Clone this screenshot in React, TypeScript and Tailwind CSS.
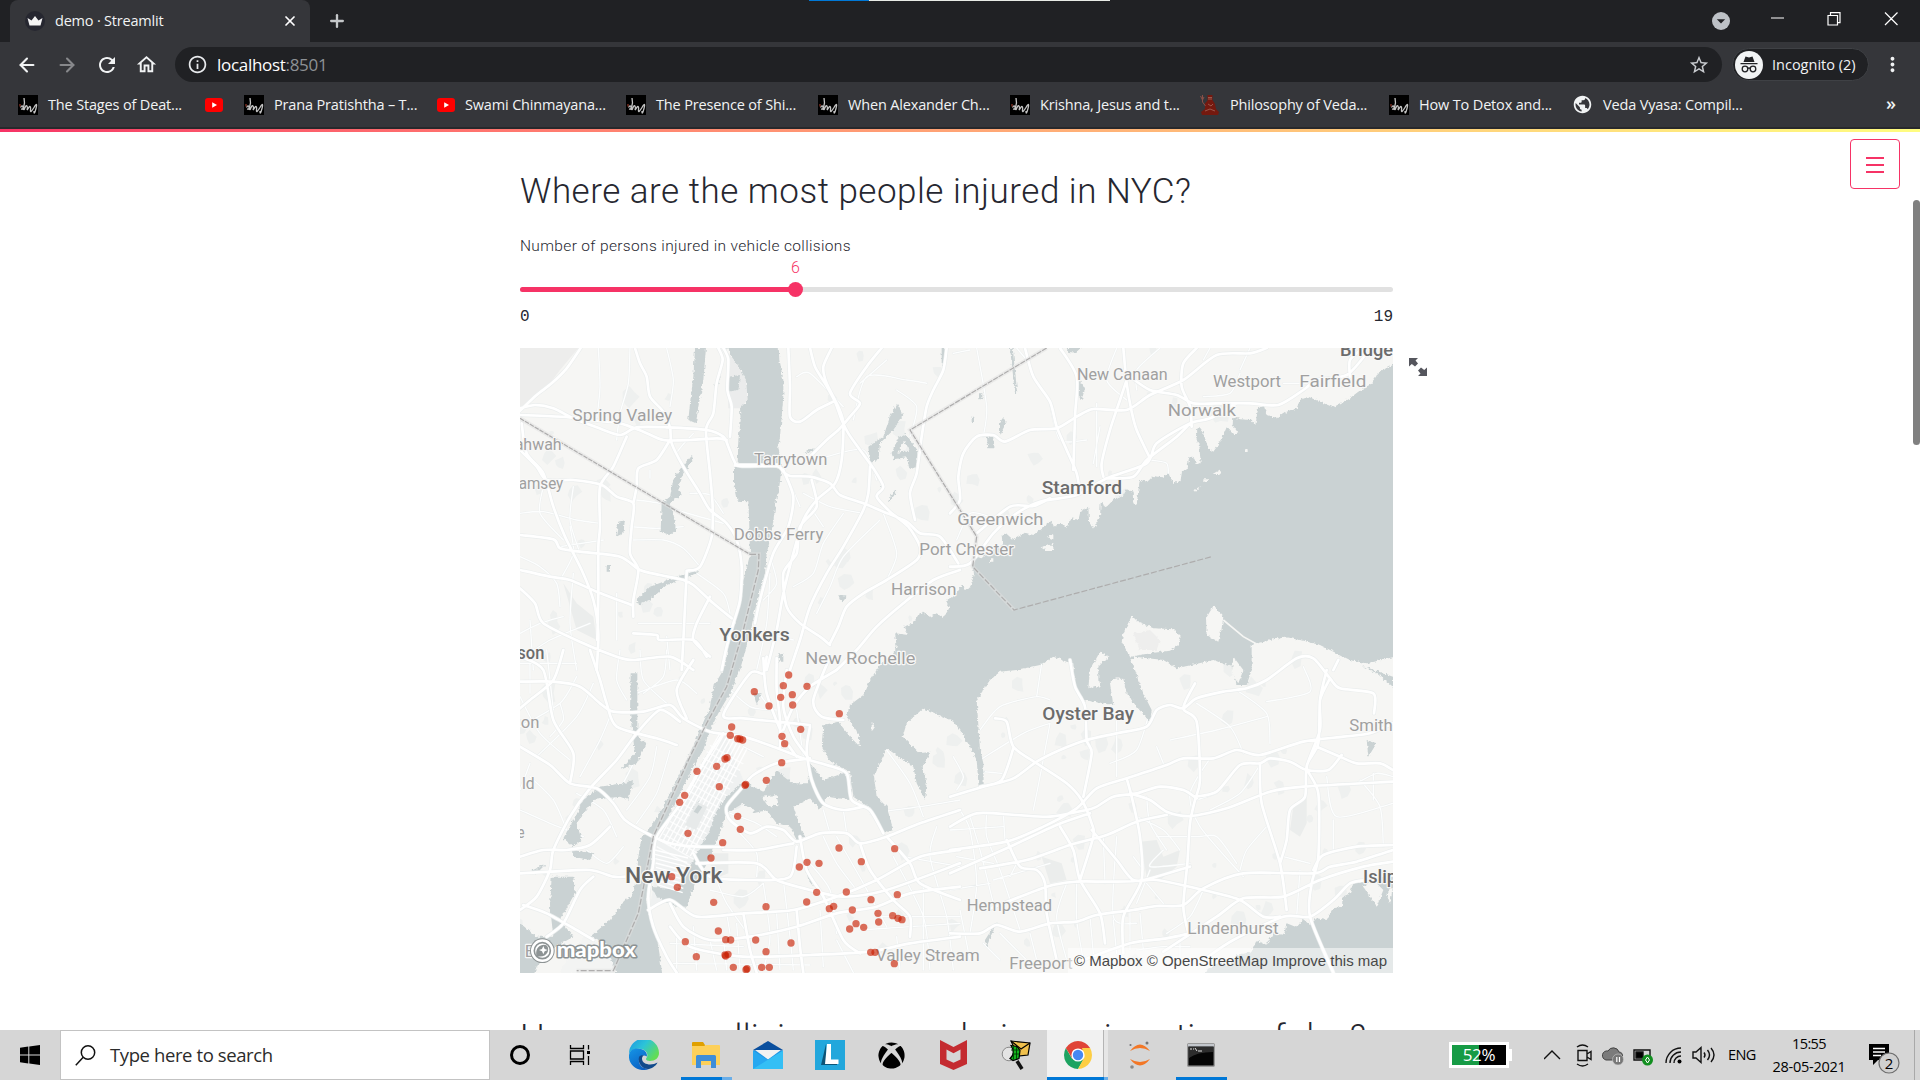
import React from "react";
import { ArrowLeft, ArrowRight, Plus, X, Search } from "lucide-react";
import { MdRefresh, MdOutlineHome, MdOutlineInfo, MdStarOutline, MdArrowDropDown, MdMoreVert, MdPublic } from "react-icons/md";
import { FaXbox } from "react-icons/fa";

type Line = string;

/* Smooth curve through "x,y x,y ..." points. */
function curve(points: Line): string {
  const p = points.split(" ").map((s) => s.split(",").map(Number));
  let d = `M${p[0][0]} ${p[0][1]}`;
  for (let i = 0; i < p.length - 1; i++) {
    const a = p[i - 1] || p[i];
    const b = p[i];
    const c = p[i + 1];
    const e = p[i + 2] || c;
    const t = 0.13;
    d += `C${b[0] + (c[0] - a[0]) * t} ${b[1] + (c[1] - a[1]) * t} ${c[0] - (e[0] - b[0]) * t} ${c[1] - (e[1] - b[1]) * t} ${c[0]} ${c[1]}`;
  }
  return d;
}

const NW = "translate(0 0)";
const NE = "translate(1320 0)";
const SW = "translate(0 930)";
const SE = "translate(1320 930)";

const major: Record<string, Line[]> = {
  [NW]: [
    "212,24 170,85 125,130 80,165 30,212",
    "30,205 75,195 130,205 190,235 260,262 330,285 380,262 470,262 590,270 640,290 655,320 672,362 690,378 800,378 820,395 840,408 900,410 960,430 990,465 1060,490 1120,515 1190,545 1230,580 1290,590 1345,670",
    "30,225 110,228 180,232 240,240 330,250 400,275 460,300 540,300 620,295 650,300",
    "375,24 390,70 410,110 420,170 460,215 480,262 485,310 520,380 570,460 600,510 650,550 680,600 695,680 690,780 670,850 650,920 635,990",
    "640,24 655,60 652,150 665,200 660,290",
    "625,24 638,60 620,130 610,220 588,270 600,400 608,500 605,590 570,680 530,692",
    "900,24 915,80 945,130 975,185 995,240 1015,280 1050,330 1090,385 1120,440 1100,470 1140,515 1195,560 1230,620 1220,660 1130,720 1060,760 1010,800 985,860 960,910",
    "965,24 940,80 950,130 985,200 1000,250 995,360 975,430 920,480 880,540 850,640 820,760 800,870 770,990",
    "1115,24 1070,80 1020,160 1050,190 1020,230 985,270 950,300 880,370",
    "835,24 840,140 840,230 870,245 920,210 970,185",
    "1310,24 1300,90 1270,150 1250,200 1235,290 1220,400 1200,460 1215,540",
    "1080,380 1075,460 1060,510 1000,620 950,700 900,800 870,900 840,990",
    "35,250 50,340 100,400 130,500 165,590 215,690 250,780 265,880 260,990",
    "30,330 80,380 110,420 190,420 275,435 320,470 370,490 365,560 360,640 385,690 370,780 370,830",
    "350,290 310,380 270,440 270,560 265,620 265,760 262,900",
    "30,585 130,598 150,625 210,635 330,650 390,690 450,705 520,720 550,735 610,790 665,835",
    "30,690 120,710 180,720 260,755 365,795",
    "30,745 75,790 100,850 220,910 320,950 370,960 480,950 550,990",
    "530,695 525,800 520,900 515,990",
    "480,300 440,360 385,385 380,440 370,490",
    "370,880 440,885 450,900 550,900 590,950",
    "600,770 560,850 550,900 600,950",
    "820,390 850,470 835,560 790,640 750,780 735,850",
    "905,420 920,500 870,560 860,640 820,700 830,800 870,850 930,890 960,915",
    "1350,690 1270,720 1180,790 1100,860 1040,930 980,990",
  ],
  [NE]: [
    "225,24 250,110 300,185 320,260 350,330 380,400 390,460",
    "330,24 380,110 375,230 370,390",
    "0,520 30,480 25,410 40,340 80,290 130,285 165,305 240,270 320,265 380,230 430,207 530,210 600,165 700,120 800,45 900,40 950,24",
    "520,24 530,130 545,215 560,270 600,355",
    "540,110 600,150 680,165 730,190 800,190 900,190 985,195 1060,150 1100,120 1190,105 1250,40",
    "740,24 700,70 695,140 720,200 725,260",
    "0,680 60,670 130,580 200,520 270,485 380,465 470,415 590,370 620,310 720,250 780,235 860,190",
    "80,580 180,500 250,498 300,475",
    "460,410 455,370 480,270 510,180 530,120",
    "470,415 550,410 590,360 680,290 720,250",
    "1200,110 1200,60 1240,24",
  ],
  [SW]: [
    "30,95 130,95 210,110 270,160 310,185 400,185 480,165 520,205 600,245 700,260 790,290 880,325 950,345 1010,370 1025,450 1080,480 1120,550",
    "240,0 270,90 290,160 320,230 440,265 500,285",
    "30,290 120,345 180,400 260,415 310,460 345,510 420,555 480,580 560,590 640,590",
    "510,215 450,180 380,250 320,330 240,415 180,500 130,600 120,660 80,740 30,780",
    "30,620 100,600 170,600 240,585 300,530",
    "30,670 120,665 240,660 310,680 345,680",
    "40,765 110,790 200,840 250,870",
    "900,225 800,215 700,205 640,195 720,70 760,70 770,20",
    "960,20 910,150 935,200 1000,210",
    "900,230 890,300 905,390 940,460 1000,480 1060,470",
    "900,325 800,340 730,375 690,420 650,470 660,510 720,550 770,530 820,540 860,575 930,550 1010,550 1050,580 1130,560 1230,520 1350,480",
    "640,250 580,340 520,450 440,560 430,640 415,740 430,830 470,920 500,968",
    "550,610 600,680 740,690 840,680 860,590",
    "640,600 740,600 850,580",
    "560,640 740,640 800,690 900,720 1000,740 1130,720 1350,640",
    "870,560 890,660 940,740 1000,870 1050,910",
    "415,780 480,750 560,800 700,790 850,780 980,740 1100,690 1230,620 1350,600",
    "480,760 520,830 600,870 720,860 860,830 980,790 1100,770 1200,730 1350,710",
    "1050,580 1080,660 1150,750 1200,800 1200,860",
    "700,790 720,900 740,968",
    "860,780 870,890 880,968",
    "480,830 540,890 700,920 900,915 1080,905 1200,880 1350,860",
    "1130,560 1200,640 1230,700 1350,750",
    "30,20 100,60 130,210 190,310 180,400",
    "0,200 60,150 130,90 160,0",
    "110,860 160,820 210,720 250,680",
    "550,30 500,120 530,205",
    "800,24 800,120 810,210 810,290",
    "760,24 770,130 820,260 860,320",
    "980,60 900,110 850,170 820,240",
    "900,330 850,260 820,170 830,60",
  ],
  [SE]: [
    "0,530 80,490 200,495 300,500 410,480 440,470 490,440 560,430 630,410 700,420 740,445",
    "0,440 100,410 190,385 260,335 330,300 410,270 500,250 590,230 620,180 660,165 700,175 740,145 820,125 890,115 950,90 1040,25 1090,25 1140,85 1170,115 1270,130 1272,190",
    "135,205 170,215 190,290 260,340 350,400 395,450 425,520 430,560 390,690",
    "190,295 155,390 90,410",
    "360,30 375,110 405,170 410,270 425,310 400,440",
    "0,600 170,575 280,530 380,475 440,415 530,385 650,345 700,325 790,325 860,300 930,315 1060,275 1180,260 1260,250 1329,220",
    "0,670 180,590 320,525 420,490",
    "170,570 210,650 260,660 285,700 290,790 320,930",
    "0,850 90,850 140,825 210,845 300,820 380,815 440,795 550,780 620,768 700,765 760,715 880,670 1090,670 1140,650 1220,635 1329,600",
    "90,655 230,630 360,585 470,555 560,515 650,495",
    "110,780 290,710 380,695 480,695 580,690 720,650",
    "425,540 500,630 550,690 620,690 760,720 870,750 940,800 990,800",
    "330,530 370,600 390,690 450,790 465,880",
    "530,385 545,440 570,560 575,690 520,800 520,910",
    "735,100 700,175 740,215 750,390 735,450 720,520 712,640 700,770 715,850",
    "540,430 600,450 650,485 720,498 830,475 960,425 1060,410 1329,395",
    "735,440 800,425 870,345 930,340 960,325 1020,335 1070,360 1135,360 1175,315",
    "930,340 935,460 990,640 1010,780",
    "1140,85 1110,150 1110,240 1070,350 1065,440 1020,480 1010,570 990,640",
    "1130,60 1110,150 1105,280 1070,350 1105,430 1105,620 1085,700 1080,800 1150,968",
    "1100,290 1170,320 1220,340 1290,340 1329,360",
    "1329,585 1220,590 1120,615 1090,660",
    "640,905 800,800 880,745 1000,740 1110,690 1240,650 1329,635",
    "400,930 540,880 650,865 720,850",
    "760,930 850,870 1000,800 1080,800 1150,750 1200,700 1250,690",
    "1150,60 1165,30",
  ],
};

const minor: Record<string, Line[]> = {
  [NW]: [
    "265,24 270,140 260,240", "360,24 355,130 330,220 320,300", "470,24 490,120 480,200", "30,520 100,515 200,540 270,550",
    "380,480 450,490 500,510 640,550", "360,560 440,565 520,560", "370,600 460,600 520,625 570,680", "30,650 90,680 140,730 150,800",
    "180,560 190,640 150,720", "30,880 90,850 160,830", "150,620 280,600", "320,760 320,900", "385,850 600,850", "470,890 480,990",
    "860,110 900,100 1000,200", "1050,130 1130,60", "1100,420 1060,330 950,350", "1030,240 1070,110 1190,120 1250,130",
    "1120,520 1160,640 1130,720", "1060,520 960,500 880,460", "1200,290 1220,200 1160,150", "1000,520 940,610 910,700 850,740",
    "1110,540 1000,650 960,740 920,820", "840,430 870,500", "560,700 640,760 660,820", "60,840 70,990", "190,700 180,850 200,990",
    "30,960 120,900 240,850", "900,500 940,560", "780,650 800,730 760,780", "520,380 500,340 550,280",
    "100,440 90,520 160,600", "190,440 180,540 210,640", "420,390 420,415", "540,460 600,465 640,520", "780,700 770,850 740,990", "700,860 850,900",
  ],
  [NE]: [
    "440,190 440,380", "450,260 430,370", "630,24 560,90 560,150", "760,60 780,24", "870,100 840,160 760,170", "900,24 870,90",
    "300,190 330,300 410,300", "600,360 650,370 655,410", "200,24 230,60", "100,290 110,200 80,24", "1000,130 1100,130", "500,24 470,120 530,180",
    "10,40 60,30", "20,600 60,520 120,530",
  ],
  [SW]: [
    "30,40 200,40", "60,0 60,130", "110,0 130,180", "30,230 150,160 200,80", "80,320 200,200 250,100", "150,160 160,210 120,260",
    "330,0 320,90 350,150", "390,0 400,90 470,160", "470,0 460,80 400,130", "380,130 500,90 560,130", "210,380 270,270 300,200",
    "400,280 350,380 310,450", "440,290 420,380 350,480", "480,300 440,430 380,520", "60,380 130,450 170,540", "30,480 120,520 220,560",
    "60,340 30,420", "200,430 280,480 320,560", "230,600 290,640 340,590", "660,490 740,520 800,560", "690,550 740,610 740,680",
    "600,720 700,740 760,700", "650,790 660,850", "620,690 650,760 720,860", "760,700 780,860 760,960", "820,690 840,860 850,960",
    "900,640 960,720 980,850", "940,560 980,640 1040,720", "980,560 1060,700 1130,830", "1080,490 1230,470 1350,450", "1130,300 1200,400 1240,500",
    "1150,620 1240,800 1260,960", "1280,530 1260,620 1310,800 1330,960", "1180,620 1350,650", "1100,800 1350,800", "1050,840 1350,820",
    "500,860 500,960", "550,830 560,960", "600,870 620,960", "640,860 650,960", "680,820 690,960", "480,880 700,890", "490,940 900,945",
    "930,780 940,950", "800,790 810,960", "1240,700 1240,960", "1160,860 1170,960", "980,870 1030,968",
    "640,100 720,170 800,180", "740,120 790,190", "860,180 880,320", "700,290 760,320", "940,480 960,550", "1000,480 1010,550", "30,140 90,250 180,330",
  ],
  [SE]: [
    "90,240 150,170 260,140 300,150", "260,140 275,40", "90,330 220,250 300,220", "300,220 270,380 250,480", "100,365 155,370",
    "500,200 500,380", "600,180 560,300 480,340", "660,270 800,240 950,200", "740,160 840,230 880,310", "860,120 950,190 960,280",
    "950,155 1080,125 1060,50", "620,290 640,340", "590,440 600,520 650,600", "740,450 800,430", "780,325 720,430 750,530 880,680",
    "620,560 740,560 800,560 860,640", "950,530 890,600 870,660", "930,345 870,430 780,480", "1130,380 1160,500 1329,460", "1230,390 1290,470 1300,590",
    "1150,510 1150,600", "1000,620 1080,640", "1220,400 1280,370 1329,380", "1270,370 1270,450", "20,420 40,380 10,320", "30,480 60,540 80,700 60,850",
    "110,490 110,560 150,660 210,840", "160,490 165,570", "0,720 120,700", "0,540 160,530", "60,500 90,600 130,760", "30,780 60,930",
    "130,690 300,640", "350,700 320,800 350,930", "380,700 380,810 400,930", "460,560 465,700", "500,560 490,800 560,820", "590,700 640,760",
    "640,600 600,650 720,640", "760,720 720,800 650,850", "540,780 540,900", "600,660 560,760", "180,680 200,640", "240,850 260,930",
    "550,620 580,660", "690,600 640,540 560,500", "1050,660 1040,800", "420,800 430,910", "490,810 500,910", "570,790 580,900",
    "720,890 640,890 560,900", "690,860 690,940", "100,880 150,930", "150,850 230,930", "20,620 130,640",
  ],
};

const dots: [number, number][] = [
  [836, 75], [820, 107], [891, 109], [733, 125], [847, 134], [812, 142], [848, 165], [777, 168], [988, 191], [665, 231], [872, 238], [661, 256],
  [816, 259], [683, 266], [690, 267], [698, 270], [824, 281], [651, 323], [645, 327], [815, 338], [620, 349], [561, 364], [769, 391], [707, 403],
  [705, 406], [628, 410], [524, 436], [509, 457], [683, 499], [691, 538], [534, 550], [638, 578], [987, 594], [1154, 596], [603, 624], [891, 637],
  [927, 640], [1054, 635], [868, 651], [485, 680], [502, 712], [920, 727], [1009, 726], [1162, 734], [1083, 749], [611, 757], [890, 756], [768, 770],
  [971, 769], [958, 776], [1027, 780], [1104, 790], [1148, 797], [1164, 805], [1176, 809], [1106, 816], [1038, 821], [1061, 832], [1019, 837],
  [625, 843], [647, 869], [662, 870], [737, 870], [526, 875], [843, 879], [768, 905], [1082, 907], [1095, 907], [654, 913], [645, 915], [647, 918],
  [559, 920], [1153, 941], [670, 952], [755, 952], [778, 952], [711, 956], [708, 959],
];

/* text, x, baseline, width, strong */
const labels: [string, number, number, number, boolean][] = [
  ["Spring Valley", 187, 243, 300, false], ["ahwah", 14, 331, 141, false], ["amsey", 26, 447, 134, false], ["Tarrytown", 732, 376, 220, false],
  ["Dobbs Ferry", 671, 600, 269, false], ["Port Chester", 1228, 646, 284, false], ["Harrison", 1143, 765, 196, false], ["New Rochelle", 886, 972, 330, false],
  ["New Canaan", 1701, 121, 272, false], ["Westport", 2109, 140, 204, false], ["Fairfield", 2368, 142, 201, false], ["Norwalk", 1973, 227, 205, false],
  ["Greenwich", 1342, 556, 258, false], ["on", 32, 1165, 56, false], ["ld", 36, 1348, 38, false], ["e", 22, 1493, 22, false],
  ["Smith", 2518, 1173, 130, false], ["Hempstead", 1370, 1712, 256, false], ["Lindenhurst", 2032, 1782, 274, false], ["Valley Stream", 1097, 1864, 312, false],
  ["Freeport", 1498, 1888, 190, false], ["Yonkers", 628, 903, 211, true], ["son", 22, 957, 81, true], ["Stamford", 1595, 461, 241, true],
  ["Bridgeport", 2490, 49, 260, true], ["Oyster Bay", 1597, 1140, 275, true], ["Islip", 2559, 1629, 102, true],
];

const land = "#f6f6f4";
const water = "#cad2d3";

function parks() {
  let s = 7;
  const rnd = () => ((s = (s * 16807) % 2147483647) / 2147483647);
  const out: string[] = [];
  for (let i = 0; i < 190; i++) {
    const x = 30 + rnd() * 2619;
    const y = 24 + rnd() * 1875;
    const r = 7 + rnd() * 19;
    let d = "";
    for (let k = 0; k < 7; k++) {
      const a = (k / 7) * 6.283;
      const q = r * (0.5 + rnd() * 0.7);
      d += `${k ? "L" : "M"}${(x + Math.cos(a) * q).toFixed(0)} ${(y + Math.sin(a) * q * 1.2).toFixed(0)}`;
    }
    out.push(d + "Z");
  }
  return out.join("");
}

function Roads({ set, casing, line, color }: { set: Record<string, Line[]>; casing: number; line: number; color: string }) {
  return (
    <g fill="none" strokeLinejoin="round" strokeLinecap="round">
      {[[casing, "#ebeeee"] as const, [line, color] as const].map(([w, c]) => (
        <g key={c} stroke={c} strokeWidth={w}>
          {Object.entries(set).map(([t, ls]) => (
            <path key={t} transform={t} d={ls.map(curve).join("")} />
          ))}
        </g>
      ))}
    </g>
  );
}

function CollisionMap() {
  return (
    <svg viewBox="30 24 2619 1875" className="block h-full w-full" preserveAspectRatio="none">
      <defs>
        <filter id="coast" x="0" y="0" width="100%" height="100%">
          <feTurbulence type="fractalNoise" baseFrequency="0.11" numOctaves="3" seed="4" />
          <feDisplacementMap in="SourceGraphic" scale="12" xChannelSelector="R" yChannelSelector="G" />
        </filter>
      </defs>
      <rect x="0" y="0" width="2700" height="1950" fill={land} />
      <path d={parks()} fill="#eef0ef" />
      <path d="M30 24H205L150 90L120 130L30 205Z" fill="#ededec" />
      <path d="M640 24L665 50L690 85L708 120L713 180L690 205L655 205L650 24Z" fill="#ebecec" />
      <path d="M600 1540h55v60l-50 20zM1890 1505l50-5 20 50 50-20-10 50-50 40-40-10zM1595 1550l60 20 15 50-50 10zM2350 1400l40-30v80l-20 40-30-20zM160 730l40 60 50 40 10 70-60-30z" fill="#ebedec" />
      <path d="M640 1170L560 1300L440 1490L430 1640L420 1700L500 1670L560 1560L640 1420L700 1320Z" fill="#eff1f1" />

      <Roads set={minor} casing={6.5} line={4} color="#fdfefe" />
      <g filter="url(#coast)" fill={water}>
        <path d="M640 0L665 50L690 85L708 120L713 180L690 205L692 240L685 300L683 370L672 385L672 430L683 482L715 484L718 560L720 645L700 720L690 790L655 920L640 990L610 1040L600 1100L570 1170L540 1240L515 1290L480 1360L455 1410L430 1450L395 1490L385 1550L380 1610L365 1670L345 1680L300 1740L240 1790L290 1810L260 1840L250 1930H460L450 1850L440 1790L420 1730L408 1680L420 1630L425 1570L430 1510L460 1460L490 1400L520 1340L550 1280L580 1230L600 1170L625 1120L660 1060L690 990L720 880L740 790L765 700L770 640L780 600L790 545L798 480L808 440L815 380L805 320L810 290L820 170L820 120L808 60L805 0Z" />
        <path d="M2700 50L2610 94L2580 134L2560 144L2520 174L2470 202L2430 185L2395 170L2370 180L2360 205L2330 215L2300 235L2270 225L2262 198L2244 205L2236 255L2222 240L2190 238L2170 230L2168 255L2185 280L2172 285L2150 262L2140 285L2122 318L2110 335L2095 325L2080 280L2066 262L2055 285L2068 320L2072 370L2060 372L2050 350L2038 352L2032 385L2016 395L2012 420L1990 432L1975 400L1958 412L1930 408L1912 425L1890 420L1886 445L1880 495L1870 490L1868 455L1850 448L1838 470L1812 478L1790 500L1772 488L1770 530L1750 568L1737 545L1735 500L1712 512L1705 540L1685 535L1670 560L1650 548L1632 562L1625 542L1600 560L1570 585L1545 578L1510 600L1488 580L1475 585L1478 615L1440 630L1415 655L1400 650L1384 672L1392 700L1380 745L1364 750L1355 735L1330 770L1308 785L1320 800L1300 835L1280 820L1262 830L1240 815L1224 826L1210 850L1180 860L1195 885L1155 880L1160 920L1145 950L1110 975L1080 1020L1060 1065L1020 1095L1010 1130L1045 1180L1050 1220L1020 1190L985 1145L940 1155L935 1220L960 1265L1020 1295L1030 1370L1080 1405L1122 1480L1150 1470L1130 1400L1100 1370L1092 1310L1130 1225L1180 1260L1210 1280L1220 1330L1245 1380L1250 1330L1238 1280L1262 1235L1230 1240L1178 1190L1190 1150L1240 1105L1300 1130L1330 1145L1350 1170L1380 1220L1400 1260L1406 1340L1421 1335L1420 1270L1410 1230L1405 1155L1400 1080L1440 1020L1470 995L1520 990L1590 975L1630 950L1670 965L1690 970L1695 1040L1720 1080L1810 1095L1800 1030L1815 1015L1840 1017L1850 1060L1880 1100L1920 1145L1925 1110L1900 1060L1875 990L1860 960L1875 950L1960 960L2000 985L2045 975L2110 960L2165 980L2180 1035L2210 1035L2225 990L2225 915L2320 890L2370 900L2430 915L2520 960L2570 970L2700 940Z" />
        <path d="M650 1370L700 1325L760 1355L800 1290L850 1330L895 1330L900 1270L940 1320L1000 1300L1025 1330L1020 1380L950 1370L930 1410L900 1375L850 1400L860 1430L885 1490L860 1500L840 1460L800 1450L770 1410L730 1420L700 1390L650 1420L625 1490L590 1570L555 1630L530 1700L500 1700L440 1670L425 1640L500 1650L530 1600L560 1540L600 1470L620 1410Z" />
        <path d="M30 1750L80 1790L130 1790L120 1700L125 1610H190L195 1660L150 1740L190 1790L120 1830L90 1860L60 1930H0Z" />
        <path d="M2649 1610L2580 1620L2530 1630L2520 1660L2498 1670L2496 1700L2470 1705L2450 1740L2420 1735L2400 1755L2380 1738L2360 1762L2330 1750L2322 1785L2290 1780L2270 1815L2240 1800L2225 1835L2180 1845L2160 1875L2120 1870L2040 1930H2700V1600Z" />
        <path d="M555 24H588L580 120L565 200L558 250L535 240L540 190L550 110ZM655 110L690 105L685 150L655 155ZM625 100L612 140H622L632 110ZM500 400L545 345L550 360L520 400L505 440L515 465L480 490L490 520L498 570L480 585L452 575L455 490L480 470L490 420ZM325 545L345 540L340 580L318 590ZM380 780L420 740L500 710L565 690L560 700L470 735L420 780L385 795ZM1160 190L1180 225L1150 270L1110 310L1105 360L1080 365L1075 320L1120 290L1140 230ZM880 340L910 325V335ZM1500 24H1508L1522 160H1515ZM1670 24H1715L1700 38L1675 36ZM1705 110L1725 145L1715 180L1707 170ZM1470 250L1480 235L1490 245L1470 285ZM1430 290H1450V325H1435ZM805 940H820V965H808ZM985 765L1010 770L995 790ZM730 1060H755L740 1095ZM362 1000H382V1190L410 1210L380 1270L330 1290L375 1240L360 1120ZM270 1340L340 1330L370 1320L355 1380L330 1370L250 1380L200 1450L215 1500L190 1520L160 1495L190 1440L220 1380ZM185 1530L250 1540L240 1560L190 1550ZM50 1600L110 1570L80 1600ZM550 1400L570 1380L560 1420L545 1430ZM1425 1800L1460 1745L1450 1770L1430 1820ZM885 1570L910 1640L895 1620ZM2570 1200L2600 1210L2575 1250ZM1295 24H1308V75H1295ZM1405 160h12v18h-12zM1385 230h10v16h-10zM1110 430h10v10h-10zM1135 480l20-30 4 6-20 30zM290 675h10v20h-10z" />
        <path d="M1165 292L1188 282L1222 330V380L1200 390L1190 352L1150 358L1145 340ZM1183 303L1162 338L1200 332Z" fillRule="evenodd" />
        <path d="M2550 975L2649 1010V1040L2600 1000Z" />
      </g>
      <g fill={land} filter="url(#coast)">
        <path d="M1865 828L1885 845L1930 865L1990 868L2012 890L2005 915L1980 932L1920 940L1860 950L1835 905L1840 880Z" />
        <path d="M2110 798L2140 830L2135 865L2125 905L2090 885L2088 835ZM1770 935L1795 950L1765 980V1035L1735 1045L1740 990ZM2170 950L2200 990L2185 1030L2165 1000ZM1750 1010L1775 1030L1760 1045ZM755 1370L800 1365L805 1395L775 1400ZM700 1395L735 1410L720 1425ZM1085 1145L1095 1160L1085 1175ZM2108 402L2132 388V402ZM2050 450L2074 438L2055 455ZM2080 418h14v8h-14zM1592 622L1630 612V630H1605ZM1610 590l20-6v14zM1440 655h10v10h-10zM2205 328h8v8h-8z" />
        <path d="M1870 880L1920 870L1950 900L1940 930L1890 930Z" fill="#eeeeed" />
        <path d="M220 1790L175 1850L150 1899H320L300 1850L270 1830L250 1795Z" fill="#f3f4f3" />
        <path d="M2560 1640L2590 1620L2620 1650L2600 1700ZM2649 1640L2630 1660L2640 1690Z" />
      </g>
      <path d="M2140 840L2200 890L2245 915" stroke={land} strokeWidth="5" fill="none" />

      <Roads set={major} casing={12} line={8} color="#ffffff" />
      <g stroke="#ffffff" strokeWidth="4" transform={SW}>
        {Array.from({ length: 9 }, (_, i) => (
          <path key={`a${i}`} d={`M${445 + i * 12} ${570 + i * 6}L${630 + i * 10} ${250 + i * 6}`} />
        ))}
        {Array.from({ length: 17 }, (_, i) => (
          <path key={`b${i}`} d={`M${440 + i * 10} ${590 - i * 19}l100 56`} opacity=".8" />
        ))}
        {Array.from({ length: 9 }, (_, i) => (
          <path key={`c${i}`} d={`M${434 + i} ${600 + i * 13}l${100 - i * 3} 24`} />
        ))}
        <path d="M525 525L560 455L592 470L558 540Z" fill="#e7eaea" stroke="none" />
        <path d="M551 485l14-20 12 6-14 20z" fill={water} stroke="none" />
      </g>
      <path d="M672 375H812" stroke="#fff" strokeWidth="10" />

      <path
        d="M30 235L720 643H747L745 690L700 870L665 990L650 1040L590 1150L540 1250L430 1490L385 1720L310 1892H200M1610 24L1200 270L1400 590L1388 680L1512 810"
        fill="none"
        stroke="#dfe0e0"
        strokeWidth="12"
        opacity=".5"
      />
      <g fill="none" stroke="#aeadad" strokeWidth="3.6">
        <path d="M30 235L720 643" strokeDasharray="14 3" />
        <path d="M1610 24L1200 270L1400 590" strokeDasharray="16 3" />
        <path d="M720 643H747L745 690L700 870L665 990L650 1040L590 1150L540 1250L430 1490L385 1720L310 1892H200M1400 590L1388 680L1512 810L2105 650" strokeDasharray="18 6" />
      </g>

      <g fontFamily="Roboto, sans-serif" fontSize="51" stroke="#f8f8f7" strokeWidth="7" strokeLinejoin="round" paintOrder="stroke">
        {labels.map(([t, x, y, w, strong]) => (
          <text key={t} x={x} y={y} textLength={w} lengthAdjust="spacingAndGlyphs" fill={strong ? "#6c6c6c" : "#a0a0a0"} fontWeight={strong ? 500 : 400} fontSize={strong ? 56 : 52}>
            {t}
          </text>
        ))}
        <text x="345" y="1630" textLength="292" lengthAdjust="spacingAndGlyphs" fontSize="66" fontWeight="500" fill="#666">New York</text>
        <text x="44" y="1850" fill="#a3a3a3">E</text>
      </g>

      <g transform={SW} fill="#c81e00" fillOpacity=".64">
        {dots.map(([x, y], i) => (
          <circle key={i} cx={x} cy={y} r="11" />
        ))}
      </g>

      <g transform="translate(97 1832)">
        <circle r="37" fill="#8d9394" />
        <circle r="34" fill="#fff" />
        <circle r="24" fill="none" stroke="#8d9394" strokeWidth="5" />
        <path d="M-18 16C-22 -8 -8 -18 5 -18C16 -18 20 -8 16 4C10 17 -4 20 -18 16Z" fill="#8d9394" />
        <path d="M3 -14L7 -5L16 -2L7 2L3 11L-1 2L-10 -2L-1 -5Z" fill="#fff" />
        <text x="43" y="18" textLength="238" lengthAdjust="spacingAndGlyphs" fontFamily="Lato, sans-serif" fontWeight="900" fontSize="64" fill="#fff" stroke="#8d9394" strokeWidth="9" strokeLinejoin="round" paintOrder="stroke">mapbox</text>
      </g>
    </svg>
  );
}

/* ---------- browser chrome ---------- */

function Scribble() {
  return (
    <svg viewBox="0 0 20 20" className="h-5 w-5 shrink-0 bg-black">
      <path d="M6 3L6.500 8L5 15M2.500 12.500Q4.500 9.500 5 12T3 14M6 15Q8 9.500 9 11T9 15L11.500 11.500Q13 11 12.500 15T16 12.500T18 13.500T16 16" fill="none" stroke="#c4c4c4" strokeWidth="1.300" />
      <path d="M2 9v2.500" stroke="#b3412d" strokeWidth="1" />
    </svg>
  );
}

function YouTube() {
  return (
    <svg viewBox="0 0 18 14" className="h-3.5 w-[18px] shrink-0">
      <rect width="18" height="14" rx="3" fill="#f00" />
      <path d="M7.200 4.300L12 7L7.200 9.700Z" fill="#fff" />
    </svg>
  );
}

function Monk() {
  return (
    <svg viewBox="0 0 20 20" className="h-5 w-5 shrink-0">
      <path d="M7.500 0h5v5l2.500 4 1 5 3 3-1 3H2l-1-3 4-3V8.500l2.500-3z" fill="#74190f" />
      <path d="M.5 1l2 4M2.500 0v7l3 4M4 2L2.500 5" stroke="#8a5048" strokeWidth="1" fill="none" />
      <path d="M8 2.500h4M8 4h4M8 9l3 2 2-2M5 16l5-2 5 2" stroke="#a5685c" strokeWidth=".8" fill="none" />
    </svg>
  );
}

function Bookmark({ icon, text, width }: { icon: React.ReactNode; text?: string; width: string }) {
  return (
    <div className={`flex h-full shrink-0 items-center gap-2.5 ${width}`}>
      {icon}
      {text && <span className="whitespace-nowrap pt-px text-[14.5px] tracking-[-0.16px] text-[#f1f3f4]">{text}</span>}
    </div>
  );
}

function Browser() {
  return (
    <header className="h-[132px] shrink-0 bg-[#202124] font-['Open_Sans','Noto_Sans',sans-serif]">
      <div className="relative flex h-[42px] pl-2.5">
        <div className="absolute left-[809px] top-0 flex h-px w-[301px] bg-[#e8ebe6]">
          <div className="h-px w-[60px] bg-[#0078d7]" />
        </div>
        <div className="flex h-full w-[300px] items-center rounded-t-lg bg-[#35363a] pl-[15px] pr-3">
          <svg viewBox="0 0 20 20" className="h-5 w-5">
            <circle cx="10" cy="10" r="10" fill="#262730" />
            <path d="M2.500 7l4 2.500L10 5l3.500 4.500 4-2.500-2 7.500h-11z" fill="#f4f4f4" />
          </svg>
          <span className="ml-2.5 flex-1 text-[14.5px] tracking-[-0.2px] text-[#f1f3f4]">demo · Streamlit</span>
          <X className="h-4 w-4 text-white" strokeWidth={2.6} />
        </div>
        <Plus className="ml-[17px] mt-[11px] h-5 w-5 text-[#c4c7c9]" strokeWidth={2.8} />
        <div className="ml-auto flex pr-[21px] text-white">
          <div className="mr-px mt-3 flex h-[18px] w-[18px] items-center justify-center rounded-full bg-[#bdc1c6]">
            <MdArrowDropDown className="h-5 w-5 shrink-0 text-[#202124]" />
          </div>
          <svg viewBox="0 0 128 14" className="ml-10 mt-3 h-3.5 w-32" fill="none" stroke="#fff" strokeWidth="1.200">
            <path d="M0 6h13M57 3.500h9.500v9.500H57zM59.500 3V.6H69v10h-2.500M114 .5l12.500 12.500M126.500 .5L114 13" />
          </svg>
        </div>
      </div>
      <div className="flex h-10 items-center bg-[#35363a] pl-4 pt-[5px]">
        <div className="flex w-[159px] items-center gap-[19px]">
          <ArrowLeft className="h-[22px] w-[22px] text-[#f1f3f4]" strokeWidth={2.3} />
          <ArrowRight className="-ml-px h-[22px] w-[22px] text-[#87888b]" strokeWidth={2.3} />
          <MdRefresh className="-ml-0.5 h-6 w-6 text-[#f1f3f4]" />
          <MdOutlineHome className="-ml-[3px] h-[23px] w-[23px] text-[#f1f3f4]" />
        </div>
        <div className="flex h-[35px] w-[1547px] items-center rounded-full bg-[#202124] pl-3 pr-3">
          <MdOutlineInfo className="h-[21px] w-[21px] text-[#e8eaed]" />
          <span className="ml-[9px] flex-1 text-[17px] tracking-[-0.3px] text-white">
            localhost<span className="text-[#8d9195]">:8501</span>
          </span>
          <MdStarOutline className="h-[22px] w-[22px] text-[#c9ccd0]" />
        </div>
        <div className="ml-2.5 flex h-[33px] w-[137px] items-center rounded-full border border-[#3f4145] bg-[#202124] pl-0.5">
          <svg viewBox="0 0 28 28" className="h-7 w-7">
            <circle cx="14" cy="14" r="14" fill="#f1f3f4" />
            <path d="M10.500 5.500l3.500 1 3.500-1 2 5.500h-11zM5.500 12h17v1.300h-17z" fill="#202124" />
            <circle cx="10" cy="18" r="2.800" fill="none" stroke="#202124" strokeWidth="1.300" />
            <circle cx="18" cy="18" r="2.800" fill="none" stroke="#202124" strokeWidth="1.300" />
            <path d="M12.500 17.500q1.500-1 3 0" fill="none" stroke="#202124" strokeWidth="1.300" />
          </svg>
          <span className="ml-[9px] whitespace-nowrap text-[14.5px] tracking-[0px] text-[#f1f3f4]">Incognito (2)</span>
        </div>
        <MdMoreVert className="ml-3 h-[23px] w-[23px] text-[#f1f3f4]" />
      </div>
      <div className="flex h-[45px] items-center bg-[#35363a] pl-[18px]">
        <Bookmark icon={<Scribble />} text="The Stages of Deat..." width="w-[187px]" />
        <Bookmark icon={<YouTube />} width="w-[39px]" />
        <Bookmark icon={<Scribble />} text="Prana Pratishtha – T..." width="w-[193px]" />
        <Bookmark icon={<YouTube />} text="Swami Chinmayana..." width="w-[189px]" />
        <Bookmark icon={<Scribble />} text="The Presence of Shi..." width="w-[192px]" />
        <Bookmark icon={<Scribble />} text="When Alexander Ch..." width="w-[192px]" />
        <Bookmark icon={<Scribble />} text="Krishna, Jesus and t..." width="w-[190px]" />
        <Bookmark icon={<Monk />} text="Philosophy of Veda..." width="w-[189px]" />
        <Bookmark icon={<Scribble />} text="How To Detox and..." width="w-[184px]" />
        <Bookmark icon={<MdPublic className="-ml-px h-[21px] w-[21px] shrink-0 text-[#f1f3f4]" />} text="Veda Vyasa: Compil..." width="w-[313px]" />
        <span className="pb-1 text-lg font-semibold text-[#f1f3f4]">»</span>
      </div>
      <div className="h-0.5 bg-[#28292c]" />
      <div className="h-[3px] bg-linear-to-r from-[#f63366] to-[#fffd80]" />
    </header>
  );
}

/* ---------- page ---------- */

function Page() {
  return (
    <main className="relative min-h-0 flex-1 overflow-hidden bg-white text-[#262730]">
      <div className="absolute right-5 top-[7px] flex h-[50px] w-[50px] flex-col items-center justify-center gap-[5px] rounded border border-[#f63366] pt-px">
        <div className="h-0.5 w-[18px] bg-[#f63366]" />
        <div className="h-0.5 w-[18px] bg-[#f63366]" />
        <div className="h-0.5 w-[18px] bg-[#f63366]" />
      </div>
      <div className="absolute right-0 top-[68px] h-[245px] w-[7px] rounded-full bg-[#808080]" />
      <div className="ml-[520px] w-[873px] font-[Roboto,sans-serif]">
        <h2 className="whitespace-nowrap pt-[37px] text-[35px] font-light leading-[46px] tracking-[0.5px]">Where are the most people injured in NYC?</h2>
        <p className="whitespace-nowrap pt-[19px] text-[15.5px] font-light leading-6 tracking-[0.35px]">Number of persons injured in vehicle collisions</p>
        <div className="w-[551px] text-center text-base leading-5 text-[#f63366] font-light">6</div>
        <div className="relative mt-[9px] flex h-[5px] rounded-full bg-[#e1e1e1]">
          <div className="h-[5px] w-[275px] rounded-full bg-[#f63366]" />
          <div className="absolute -top-[5px] left-[268px] h-[15px] w-[15px] rounded-full bg-[#f63366]" />
        </div>
        <div className="mt-[15px] flex justify-between font-['Liberation_Mono',monospace] text-base leading-5">
          <span>0</span>
          <span>19</span>
        </div>
        <div className="relative mt-[21px] h-[625px]">
          <CollisionMap />
          <div className="absolute bottom-0 right-0 h-[25px] whitespace-nowrap bg-white/50 px-1.5 font-['Liberation_Sans',sans-serif] text-[15px] leading-[25px] text-[#484848]">
            © Mapbox © OpenStreetMap Improve this map
          </div>
          <svg viewBox="0 0 18 18" className="absolute -right-[34px] top-[10px] h-[18px] w-[18px]" fill="#55565d">
            <path d="M0 0h9L6.500 2.500 9 5.500 6 8.500 2.800 6 0 8.500zM18 18H9l2.500-2.500L9 12.500l3-3 3.200 2.500L18 9.500z" />
          </svg>
        </div>
        <h2 className="whitespace-nowrap pt-[42px] text-[35px] font-light leading-[46px] tracking-[0.3px]">How many collisions occur during a given time of day?</h2>
      </div>
    </main>
  );
}

/* ---------- taskbar ---------- */

function Slot({ children, width, className = "" }: { children: React.ReactNode; width: string; className?: string }) {
  return <div className={`flex h-full shrink-0 items-center justify-center ${width} ${className}`}>{children}</div>;
}

function Taskbar() {
  return (
    <footer className="flex h-[50px] shrink-0 items-stretch bg-[#d6d6d6] font-['Open_Sans','Noto_Sans',sans-serif] text-black">
      <Slot width="w-[60px]">
        <svg viewBox="0 0 20 20" className="h-5 w-5"><path d="M0 2.800L8.300 1.600V9.500H0zM9.300 1.450L20 0V9.500H9.300zM0 10.500H8.300V18.400L0 17.200zM9.300 10.500H20V20L9.300 18.550z" /></svg>
      </Slot>
      <div className="flex w-[430px] items-center border border-[#c3c3c3] bg-white pl-3.5">
        <svg viewBox="0 0 21 21" className="h-[21px] w-[21px]" fill="none" stroke="#111" strokeWidth="1.500">
          <circle cx="13" cy="7.500" r="6.700" />
          <path d="M8.200 12.300L.8 20.200" />
        </svg>
        <span className="ml-3.5 text-[18.5px] tracking-[-0.4px] text-[#2b2b2b]">Type here to search</span>
      </div>
      <Slot width="w-[60px]"><div className="h-5 w-5 rounded-full border-[3px] border-black" /></Slot>
      <Slot width="w-[62px]" className="pr-0.5">
        <svg viewBox="0 0 22 20" className="h-5 w-[22px]" fill="none" stroke="#000" strokeWidth="1.300">
          <path d="M1.500 0v3.500h13V0M1.500 20v-3.500h13V20M1.500 6h13v8h-13zM19.500 0v4.500M19.500 11v9" />
          <path d="M18 6h3v3h-3z" fill="#000" stroke="none" />
        </svg>
      </Slot>
      <Slot width="w-[63px]">
        <svg viewBox="0 0 30 30" className="h-[30px] w-[30px]">
          <defs>
            <linearGradient id="edgeA" x1="0" x2="1" y1="0" y2=".6"><stop offset=".1" stopColor="#1f9fe0" /><stop offset=".5" stopColor="#2cc4d8" /><stop offset="1" stopColor="#62dd55" /></linearGradient>
            <linearGradient id="edgeB" x1="0" x2=".6" y1="0" y2="1"><stop offset="0" stopColor="#1595e6" /><stop offset="1" stopColor="#0b61c4" /></linearGradient>
          </defs>
          <path d="M0 14A15 15 0 0 1 30 13C30 18 26 21 21 21C18 21 16 19.500 17.500 18C20 14 17 10 12 9C6 8 1 11 0 14Z" fill="url(#edgeA)" />
          <path d="M0 15C1 9 7 7.500 12 9C16 10 18.500 13 17.800 16.500C14 14 9 17 10 22C11 27 16 29 20 29C9 33-1 25 0 15Z" fill="url(#edgeB)" />
          <path d="M10 17C8 24 15 30 20 29C24 28 27.500 25 28.500 22.500C23 26 13 25 13 18.500C13 17 14 16 15 15.300C12.500 15 10.800 15.500 10 17Z" fill="#114a8b" />
        </svg>
      </Slot>
      <Slot width="w-[62px]" className="relative">
        <svg viewBox="0 0 28 26" className="h-[26px] w-7">
          <path d="M0 1q0-1 1-1h10l2 3v4H0z" fill="#e0a000" /><path d="M0 4h12l2-1h13q1 0 1 1v19H0z" fill="#fdd05a" />
          <path d="M4 26V14.500q0-1.500 1.500-1.500h17q1.500 0 1.500 1.500V26h-5v-7H9v7z" fill="#3f8ed8" />
        </svg>
        <div className="absolute bottom-0 left-[6px] flex h-[3px] w-[51px] bg-[#6aaee8]"><div className="w-[41px] bg-[#0078d7]" /></div>
      </Slot>
      <Slot width="w-[62px]">
        <svg viewBox="0 0 30 28" className="h-7 w-[30px]">
          <path d="M0 9L15 0L30 9L15 14Z" fill="#0a4f9e" /><path d="M0 9.500h30V28H0z" fill="#1f94e4" /><path d="M2 9h26L15 18.500z" fill="#f2f2f2" />
          <path d="M0 9.500L15 19L30 9.500V28H0z" fill="#27a8f0" /><path d="M0 28L16 18L30 9.500V28z" fill="#3ccbf7" opacity=".65" />
        </svg>
      </Slot>
      <Slot width="w-[62px]">
        <svg viewBox="0 0 30 30" className="h-[30px] w-[30px]">
          <rect width="30" height="30" fill="#22a7dc" /><path d="M11 4L6 25H22V21H12z" fill="#0c5578" /><path d="M12 4h4v15.500h7.500V24H10z" fill="#fff" />
        </svg>
      </Slot>
      <Slot width="w-[62px]" className="pr-0.5"><FaXbox className="h-[27px] w-[27px]" /></Slot>
      <Slot width="w-[62px]" className="pr-px">
        <svg viewBox="0 0 27 30" className="h-[30px] w-[27px]"><path d="M0 0L13.500 7L27 0V24L13.500 30L0 24ZM6.500 9.500V19.500L13.500 22.800L20.500 19.500V9.500L13.500 13.300Z" fill="#c42b30" fillRule="evenodd" /></svg>
      </Slot>
      <Slot width="w-[62px]">
        <svg viewBox="0 0 30 30" className="h-[30px] w-[30px]">
          <path d="M10 1l19 2-2 12-10 1z" fill="#f0c04c" stroke="#000" strokeWidth="1.200" /><path d="M10 1l10 8 9-6" fill="none" stroke="#000" strokeWidth="1.200" />
          <circle cx="8" cy="14" r="6.800" fill="#e4e4e4" stroke="#8b8b8b" strokeWidth="1" /><path d="M10 5.500l6 1 3 4-1 8-6 2-3-2q6-5 1-13z" fill="#12b41c" stroke="#000" strokeWidth="1.200" />
          <path d="M12.500 6.500v13M15.500 7v12M10 10h8.500M11.500 14h7" stroke="#003c06" strokeWidth=".9" /><path d="M16 21l5 8" stroke="#111" strokeWidth="3.500" />
        </svg>
      </Slot>
      <Slot width="w-[61px]" className="relative">
        <div className="absolute inset-y-0 left-0 flex w-[61px]"><div className="w-[57px] border-r border-[#b4b4b4] bg-[#f1f1f1]" /><div className="w-1 bg-[#e6e6e6]" /></div>
        <svg viewBox="-14 -14 28 28" className="relative h-7 w-7">
          <path d="M0 0L-12.120-7A14 14 0 0 1 12.120-7Z" fill="#e04437" /><path d="M-12.120-7A14 14 0 0 0 0 14L6.060 3.500L-6.060 3.500Z" fill="#1da361" />
          <path d="M12.120-7A14 14 0 0 1 0 14L6.500 2L4-7Z" fill="#fdce44" /><path d="M-12.120-7L-5.500 4L0-7Z" fill="#e04437" />
          <circle r="6.600" fill="#fff" /><circle r="5.200" fill="#4688f1" />
        </svg>
        <div className="absolute bottom-0 left-0 flex h-[3px] w-[61px] bg-[#6aaee8]"><div className="w-[57px] bg-[#0078d7]" /></div>
      </Slot>
      <Slot width="w-[62px]">
        <svg viewBox="0 0 22 28" className="ml-0.5 h-7 w-[22px]">
          <path d="M1 10Q11-3 21 10Q11 4 1 10ZM1 18Q11 31 21 18Q11 24 1 18Z" fill="#f37726" /><circle cx="18" cy="2" r="1.500" fill="#767677" /><circle cx="1.500" cy="4" r="1.100" fill="#767677" /><circle cx="3" cy="26" r="1.800" fill="#8a8a8a" />
        </svg>
      </Slot>
      <Slot width="w-[62px]" className="relative">
        <svg viewBox="0 0 28 24" className="h-6 w-7"><rect x=".7" y=".7" width="26.600" height="22.600" rx="1" fill="#050505" stroke="#9a9a9a" strokeWidth="1.400" /><path d="M1 1h26v2.500H1z" fill="#c3c7cc" /><path d="M3 6h2M6 6h1M8 5l2 3M11 8h4" stroke="#ddd" strokeWidth="1" /><path d="M2 4h24v5Q10 9 2 15z" fill="#fff" opacity=".16" /></svg>
        <div className="absolute bottom-0 left-[6px] h-[3px] w-[51px] bg-[#0078d7]" />
      </Slot>

      <div className="ml-auto flex items-center">
        <div className="flex h-[26px] w-[60px] items-center justify-center border-[3px] border-white bg-linear-to-r from-[#169b45] from-50% to-black to-50% text-[17px] tracking-[-0.3px] text-white">52%</div>
        <div className="h-3 w-[3px] bg-white" />
        <svg viewBox="0 0 184 24" className="ml-8 h-6 w-[184px]" fill="none" stroke="#111" strokeWidth="1.400">
          <path d="M0 16L8 8l8 8" />
          <path d="M34 7.500h9v10h-9zM43 11l4-2.500v8L43 14M33 4q5.500-4 11 0M33 21q5.500 4 11 0" />
          <path d="M62 17h12a4 4 0 0 0 1-8a6 6 0 0 0-11-1a4.500 4.500 0 0 0-2 9z" fill="#7b7b7b" stroke="#444" strokeWidth="1" /><circle cx="74" cy="16.500" r="5.500" fill="#777" stroke="#ccc" strokeWidth=".6" /><path d="M72.800 14v5M75.500 14v5" stroke="#fff" strokeWidth="1.200" />
          <path d="M90 7h16v10H90z" /><path d="M92 9h7v6h-7z" fill="#000" /><circle cx="103.500" cy="17" r="5.500" fill="#128f20" stroke="none" /><path d="M103.500 14l2 3-2 3-2-3z" stroke="#fff" strokeWidth="1" />
          <path d="M122 20A15 15 0 0 1 137 5M126 20A11 11 0 0 1 137 9M130 20A7 7 0 0 1 137 13" /><circle cx="135.500" cy="18.500" r="2" fill="#000" stroke="none" />
          <path d="M149 9h3l5-4.500v15L152 15h-3zM160 9.500q2 2.500 0 5M163.500 7q4 5 0 10M167 5q6 7 0 14" />
        </svg>
        <span className="w-[31px] text-[14.5px] tracking-[-0.6px]">ENG</span>
        <div className="ml-2 flex w-[84px] flex-col items-center text-[14.5px] leading-[23px] tracking-[-0.25px]">
          <span className="tracking-[-0.6px]">15:55</span>
          <span>28-05-2021</span>
        </div>
        <svg viewBox="0 0 32 34" className="ml-[18px] mt-2 h-[34px] w-8">
          <path d="M0 2h20v16H9l-5 5v-5H0z" /><path d="M4 6.500h12M4 10h12M4 13.500h8" stroke="#fff" strokeWidth="1.300" />
          <circle cx="20" cy="21" r="10" fill="#d0d0d0" stroke="#6e6e6e" strokeWidth="1.200" />
          <text x="20" y="26.500" textAnchor="middle" fontSize="15" fill="#000">2</text>
        </svg>
        <div className="ml-[13px] mr-[5px] h-[50px] w-px bg-[#a9a9a9]" />
      </div>
    </footer>
  );
}

export default function App() {
  return (
    <div className="flex h-[1080px] w-[1920px] flex-col overflow-hidden">
      <Browser />
      <Page />
      <Taskbar />
    </div>
  );
}
